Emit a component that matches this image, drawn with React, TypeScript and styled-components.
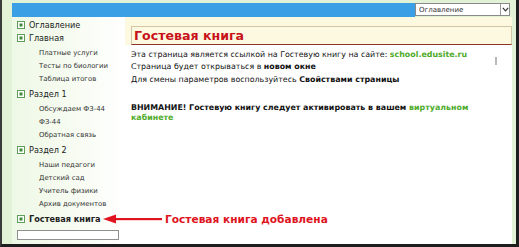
import React from "react";
import styled, { createGlobalStyle } from "styled-components";

const Global = createGlobalStyle`
  html, body { margin: 0; padding: 0; background: #ffffff; }
  * { box-sizing: border-box; }
`;

const Frame = styled.div`
  position: relative;
  width: 519px;
  height: 247px;
  background: #e2f2d6;
  border-left: 2px solid #3a3a3a;
  border-right: 3px solid #1e1e1e;
  border-bottom: 3px solid #1e1e1e;
  padding: 3px 4px 0 10px;
  display: flex;
  flex-direction: column;
  font-family: "DejaVu Sans", Verdana, sans-serif;
  overflow: hidden;
`;

const TopBar = styled.div`
  display: flex;
  height: 14px;
  padding-right: 2px;
`;

const BlueBar = styled.div`
  flex: 1;
  background: #3b9fe5;
`;

const Select = styled.div`
  width: 95px;
  height: 13px;
  background: #ffffff;
  border: 1px solid #8a8a8a;
  display: flex;
  align-items: center;
  font-size: 7px;
  color: #333;
  padding-left: 3px;
`;

const SelectText = styled.span`
  flex: 1;
`;

const SelectArrow = styled.span`
  width: 9px;
  height: 11px;
  border-left: 1px solid #9a9a9a;
  display: flex;
  align-items: center;
  justify-content: center;
`;

const Body = styled.div`
  flex: 1;
  display: flex;
  min-height: 0;
`;

const Sidebar = styled.div`
  width: 113px;
  background: linear-gradient(90deg, #eef8e6 0%, #f8fcf3 60%, #ffffff 100%);
  padding: 1px 0 0 5px;
  display: flex;
  flex-direction: column;
`;

const TopItem = styled.div<{ $bold?: boolean }>`
  height: 13px;
  display: flex;
  align-items: center;
  gap: 4px;
  font-size: ${(p) => (p.$bold ? "8.2px" : "8.1px")};
  color: #222;
  font-weight: ${(p) => (p.$bold ? 700 : 400)};
  white-space: nowrap;
`;

const SubList = styled.div`
  padding: 2px 0;
  display: flex;
  flex-direction: column;
`;

const SubItem = styled.div`
  height: 13px;
  display: flex;
  align-items: center;
  padding-left: 22px;
  font-size: 6.9px;
  color: #333;
  white-space: nowrap;
`;

const SearchBox = styled.div`
  margin-top: 5px;
  width: 102px;
  height: 10px;
  background: #ffffff;
  border: 1px solid #8f8f8f;
`;

const Content = styled.div`
  flex: 1;
  background: #ffffff;
  display: flex;
  flex-direction: column;
  position: relative;
`;

const TitleArea = styled.div`
  background: #fdf9e1;
  padding: 9px 0 0 6px;
`;

const TitleBox = styled.div`
  height: 19px;
  border: 1px solid #d3c6a4;
  border-bottom: 1px solid #8e3426;
  display: flex;
  align-items: center;
  padding-left: 2px;
  font-size: 12.6px;
  font-weight: 700;
  color: #c8121a;
`;

const Text = styled.div`
  padding: 4px 0 0 6px;
  font-size: 7.9px;
  line-height: 12.3px;
  color: #111;
  white-space: nowrap;
`;

const Warn = styled.div`
  padding: 17px 0 0 6px;
  font-size: 7.9px;
  line-height: 10.5px;
  font-weight: 700;
  color: #111;
  white-space: nowrap;
`;

const Link = styled.span`
  color: #4eab2a;
  font-weight: 700;
`;

const B = styled.b`
  font-weight: 700;
`;

const Caret = styled.div`
  position: absolute;
  left: 370px;
  top: 40px;
  width: 2px;
  height: 8px;
  background: #b8b8b8;
`;

const Annotation = styled.div`
  position: absolute;
  left: 101px;
  top: 212px;
  height: 14px;
  display: flex;
  align-items: center;
  gap: 3px;
  font-size: 10.6px;
  font-weight: 700;
  color: #e0141e;
  white-space: nowrap;
`;

const Bullet = () => (
  <svg width="8" height="8" viewBox="0 0 8 8">
    <rect x="0.5" y="0.5" width="7" height="7" fill="#fff" stroke="#5f9e5a" />
    <rect x="2.5" y="2.5" width="3" height="3" fill="#3f8a3a" />
  </svg>
);

const Arrow = () => (
  <svg width="59" height="10" viewBox="0 0 59 10">
    <polygon points="0,5 13,0.5 13,9.5" fill="#e0141e" />
    <rect x="12" y="4" width="47" height="2.2" fill="#e0141e" />
  </svg>
);

const groups: { title: string; bold?: boolean; subs: string[] }[] = [
  { title: "Оглавление", subs: [] },
  { title: "Главная", subs: ["Платные услуги", "Тесты по биологии", "Таблица итогов"] },
  { title: "Раздел 1", subs: ["Обсуждаем ФЗ-44", "ФЗ-44", "Обратная связь"] },
  { title: "Раздел 2", subs: ["Наши педагоги", "Детский сад", "Учитель физики", "Архив документов"] },
  { title: "Гостевая книга", bold: true, subs: [] },
];

export default function App() {
  return (
    <>
      <Global />
      <Frame>
        <TopBar>
          <BlueBar />
          <Select>
            <SelectText>Оглавление</SelectText>
            <SelectArrow>
              <svg width="7" height="5" viewBox="0 0 7 5">
                <polyline points="0.8,0.8 3.5,3.8 6.2,0.8" fill="none" stroke="#333" strokeWidth="1.2" />
              </svg>
            </SelectArrow>
          </Select>
        </TopBar>
        <Body>
          <Sidebar>
            {groups.map((g) => (
              <React.Fragment key={g.title}>
                <TopItem $bold={g.bold}>
                  <Bullet />
                  {g.title}
                </TopItem>
                {g.subs.length > 0 && (
                  <SubList>
                    {g.subs.map((s) => (
                      <SubItem key={s}>{s}</SubItem>
                    ))}
                  </SubList>
                )}
              </React.Fragment>
            ))}
            <SearchBox />
          </Sidebar>
          <Content>
            <TitleArea>
              <TitleBox>Гостевая книга</TitleBox>
            </TitleArea>
            <Text>
              Эта страница является ссылкой на Гостевую книгу на сайте: <Link>school.edusite.ru</Link>
              <br />
              Страница будет открываться в <B>новом окне</B>
              <br />
              Для смены параметров воспользуйтесь <B>Свойствами страницы</B>
            </Text>
            <Warn>
              ВНИМАНИЕ! Гостевую книгу следует активировать в вашем <Link>виртуальном</Link>
              <br />
              <Link>кабинете</Link>
            </Warn>
            <Caret />
          </Content>
        </Body>
        <Annotation>
          <Arrow />
          Гостевая книга добавлена
        </Annotation>
      </Frame>
    </>
  );
}
